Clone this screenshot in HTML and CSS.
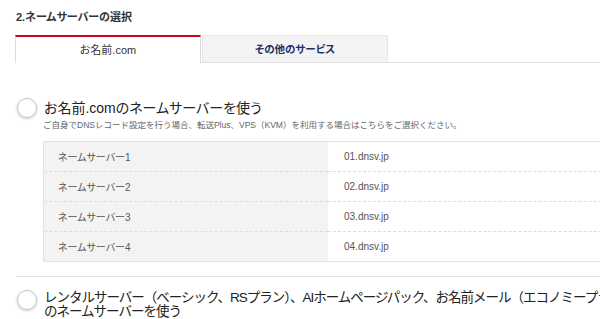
FILE: index.html
```html
<!DOCTYPE html>
<html lang="ja">
<head>
    <meta charset="UTF-8">
    <meta name="viewport" content="width=device-width, initial-scale=1.0">
    <title>ネームサーバーの選択</title>
    <link rel="stylesheet" href="styles.css">
</head>
<body>
    <div class="page">
        <div class="section-title">2.ネームサーバーの選択</div>

        <div class="tabs">
            <div class="tab active">お名前.com</div>
            <div class="tab other">その他のサービス</div>
        </div>

        <div class="option first">
            <div class="option-head">
                <span class="radio"></span>
                <div class="option-label">お名前.comのネームサーバーを使う</div>
            </div>
            <div class="option-note">ご自身でDNSレコード設定を行う場合、転送Plus、VPS（KVM）を利用する場合はこちらをご選択ください。</div>

            <table class="ns-table">
                <tr><th>ネームサーバー1</th><td>01.dnsv.jp</td></tr>
                <tr><th>ネームサーバー2</th><td>02.dnsv.jp</td></tr>
                <tr><th>ネームサーバー3</th><td>03.dnsv.jp</td></tr>
                <tr><th>ネームサーバー4</th><td>04.dnsv.jp</td></tr>
            </table>
        </div>

        <div class="option second">
            <div class="option-head">
                <span class="radio"></span>
                <div class="option-label">レンタルサーバー（ベーシック、RSプラン）、AIホームページパック、お名前メール（エコノミープラン）<br>のネームサーバーを使う</div>
            </div>
        </div>
    </div>
</body>
</html>
```

FILE: styles.css
```css
body {
    margin: 0;
    padding: 0;
    background: #ffffff;
    color: #333;
    font-family: "Liberation Sans", "Noto Sans CJK JP", sans-serif;
    font-feature-settings: "palt";
    overflow: hidden;
}
.page {
    width: 720px;
    padding: 10px 0 0 16px;
}
.section-title {
    font-size: 11px;
    font-weight: bold;
    line-height: 14px;
    color: #333;
}
.tabs {
    display: flex;
    align-items: flex-end;
    margin-top: 11px;
    margin-left: -1px;
    border-bottom: 1px solid #e0e0e0;
}
.tab {
    width: 184px;
    text-align: center;
    font-size: 11px;
}
.tab.active {
    height: 26px;
    line-height: 26px;
    border-top: 2px solid #d0021b;
    border-left: 1px solid #dcdcdc;
    border-right: 1px solid #dcdcdc;
    margin-bottom: -1px;
    background: #ffffff;
    color: #333;
}
.tab.other {
    height: 26px;
    line-height: 26px;
    margin-left: 1px;
    background: #f3f3f3;
    border: 1px solid #e6e6e6;
    border-bottom: none;
    color: #1d2f66;
    font-weight: bold;
    font-size: 10.5px;
}
.option {
    padding-left: 1px;
}
.option.first {
    padding-top: 35px;
    padding-bottom: 14px;
    border-bottom: 1px solid #e3e3e3;
}
.option.second {
    padding-top: 13px;
}
.option-head {
    display: flex;
    align-items: flex-start;
    gap: 7px;
}
.radio {
    flex: none;
    width: 18px;
    height: 18px;
    border: 1px solid #c8c8c8;
    border-radius: 50%;
    background: #ffffff;
    box-shadow: 0 1px 3px rgba(0, 0, 0, 0.2);
}
.option-label {
    font-size: 14px;
    line-height: 15px;
    color: #222;
    padding-top: 3px;
    white-space: nowrap;
}
.option.second .option-label {
    font-size: 13.5px;
    line-height: 14px;
    padding-top: 1px;
    letter-spacing: -1px;
    font-feature-settings: normal;
}
.option-note {
    margin: 0 0 0 26px;
    font-size: 8.5px;
    color: #666;
    font-feature-settings: normal;
}
.ns-table {
    margin: 11px 0 0 26px;
    width: 640px;
    border-collapse: collapse;
    border: 1px solid #e2e2e2;
    font-size: 10px;
    color: #555;
}
.ns-table th, .ns-table td {
    height: 29px;
    padding: 0 0 0 14px;
    text-align: left;
    font-weight: normal;
    border-bottom: 1px dashed #dddddd;
}
.ns-table th {
    width: 270px;
    background: #f3f3f3;
}
.ns-table td {
    padding-left: 16px;
}
```
